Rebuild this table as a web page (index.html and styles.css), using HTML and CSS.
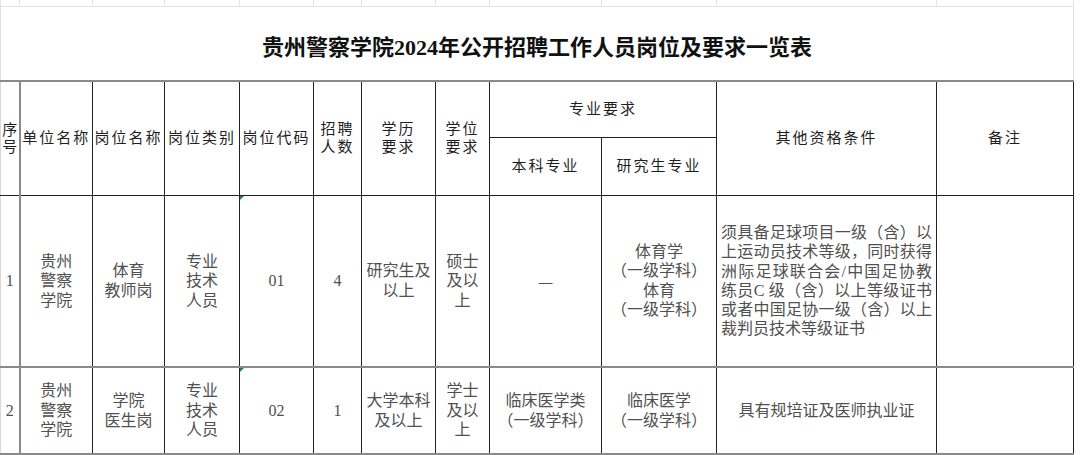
FILE: index.html
```html
<!DOCTYPE html>
<html lang="zh-CN">
<head>
<meta charset="utf-8">
<title>贵州警察学院2024年公开招聘工作人员岗位及要求一览表</title>
<link rel="stylesheet" href="styles.css">
</head>
<body>
<table class="sheet">
  <colgroup>
    <col class="c1"><col class="c2"><col class="c3"><col class="c4"><col class="c5"><col class="c6">
    <col class="c7"><col class="c8"><col class="c9"><col class="c10"><col class="c11"><col class="c12">
  </colgroup>
  <tr class="grid">
    <td></td><td></td><td></td><td></td><td></td><td></td><td></td><td></td><td></td><td></td><td></td><td></td>
  </tr>
  <tr class="title-row">
    <td class="title" colspan="12">贵州警察学院2024年公开招聘工作人员岗位及要求一览表</td>
  </tr>
  <tr class="head1">
    <th class="first narrow" rowspan="2">序<br>号</th>
    <th rowspan="2">单位名称</th>
    <th rowspan="2">岗位名称</th>
    <th rowspan="2">岗位类别</th>
    <th rowspan="2">岗位代码</th>
    <th rowspan="2">招聘<br>人数</th>
    <th rowspan="2">学历<br>要求</th>
    <th rowspan="2">学位<br>要求</th>
    <th class="major" colspan="2">专业要求</th>
    <th rowspan="2">其他资格条件</th>
    <th rowspan="2">备注</th>
  </tr>
  <tr class="head2">
    <th class="sub">本科专业</th>
    <th class="sub">研究生专业</th>
  </tr>
  <tr class="data row1">
    <td class="first num">1</td>
    <td>贵州<br>警察<br>学院</td>
    <td>体育<br>教师岗</td>
    <td>专业<br>技术<br>人员</td>
    <td class="num code">01</td>
    <td class="num">4</td>
    <td>研究生及<br>以上</td>
    <td>硕士<br>及以<br>上</td>
    <td class="dash">—</td>
    <td>体育学<br>（一级学科）<br>体育<br>（一级学科）</td>
    <td class="cond">
      <span class="ln">须具备足球项目一级（含）以</span>
      <span class="ln">上运动员技术等级，同时获得</span>
      <span class="ln">洲际足球联合会/中国足协教</span>
      <span class="ln">练员C 级（含）以上等级证书</span>
      <span class="ln">或者中国足协一级（含）以上</span>
      <span class="ln last">裁判员技术等级证书</span>
    </td>
    <td></td>
  </tr>
  <tr class="data row2">
    <td class="first num">2</td>
    <td>贵州<br>警察<br>学院</td>
    <td>学院<br>医生岗</td>
    <td>专业<br>技术<br>人员</td>
    <td class="num code">02</td>
    <td class="num">1</td>
    <td>大学本科<br>及以上</td>
    <td>学士<br>及以<br>上</td>
    <td>临床医学类<br>（一级学科）</td>
    <td>临床医学<br>（一级学科）</td>
    <td>具有规培证及医师执业证</td>
    <td></td>
  </tr>
</table>
</body>
</html>
```

FILE: styles.css
```css
html, body {
  margin: 0;
  padding: 0;
  background: #ffffff;
}

.sheet {
  border-collapse: collapse;
  table-layout: fixed;
  width: 1073px;
}

.c1 { width: 19px; }
.c2 { width: 73px; }
.c3 { width: 72px; }
.c4 { width: 75px; }
.c5 { width: 74px; }
.c6 { width: 48px; }
.c7 { width: 74px; }
.c8 { width: 54px; }
.c9 { width: 112px; }
.c10 { width: 115px; }
.c11 { width: 220px; }
.c12 { width: 137px; }

.sheet td, .sheet th {
  padding: 0;
  border: 1px solid #222222;
  text-align: center;
  vertical-align: middle;
  overflow: hidden;
}

/* spreadsheet grid strip above the title */
.grid { height: 6px; }
.grid td {
  border: 1px solid #e2e2e2;
  border-top: none;
  height: 5px;
}

.title-row { height: 75px; }
.sheet .title {
  border-left: 1px solid #dcdcdc;
  border-right: 1px solid #dcdcdc;
  border-top: 1px solid #e2e2e2;
  border-bottom: 2px solid #8a8a8a;
  font-family: "Liberation Serif", "Noto Sans CJK SC", serif;
  font-weight: 700;
  font-size: 22px;
  color: #111111;
  padding-top: 3px;
}

.head1 { height: 56px; }
.head2 { height: 58px; }

.sheet th {
  font-family: "Liberation Sans", "Noto Sans CJK SC", sans-serif;
  font-weight: 400;
  font-size: 15px;
  line-height: 18px;
  letter-spacing: 2px;
  color: #1f1f1f;
}

.sheet th.narrow {
  letter-spacing: 0;
  line-height: 17.5px;
}

.sheet .first {
  border-left: 1px solid #d8d8d8;
  border-right: 2px solid #8a8a8a;
}

.row1 { height: 172px; }
.row2 { height: 87px; }

.data td {
  font-family: "Liberation Serif", "Noto Sans CJK SC", serif;
  font-size: 16px;
  line-height: 19.5px;
  color: #505050;
  border-bottom: 2px solid #8a8a8a;
}

.data td.code {
  position: relative;
}

.data td.code::before {
  content: "";
  position: absolute;
  left: 0;
  top: 0;
  width: 0;
  height: 0;
  border-top: 4px solid #1f8a3a;
  border-right: 4px solid transparent;
}

.data td.dash {
  font-family: "Noto Sans CJK SC", sans-serif;
  font-size: 17px;
}

.data td.cond {
  text-align: left;
  padding: 0 4px 0 4px;
  line-height: 19.2px;
}

.ln {
  display: block;
  text-align: justify;
  text-align-last: justify;
  white-space: nowrap;
}

.ln.last {
  text-align-last: left;
}
```
